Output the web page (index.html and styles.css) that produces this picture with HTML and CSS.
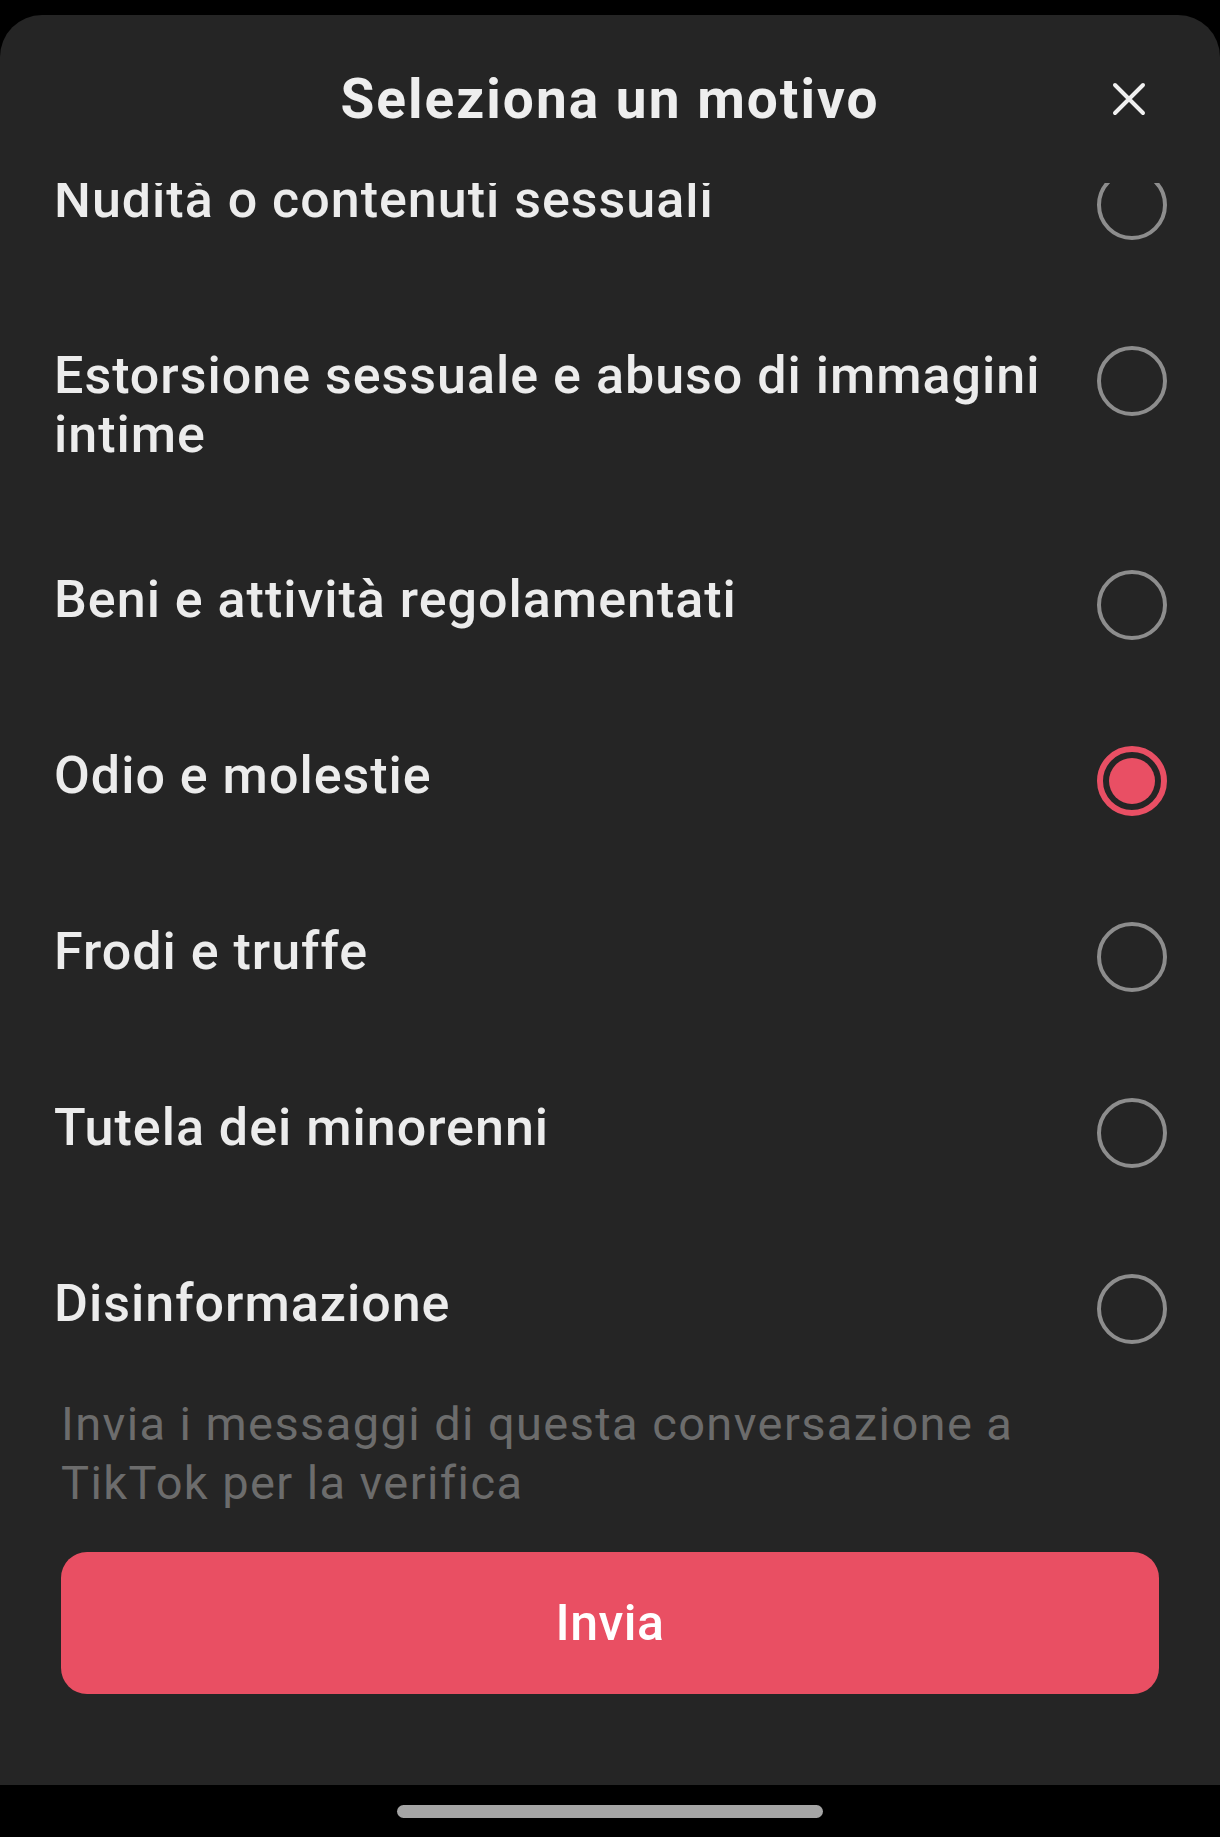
FILE: index.html
```html
<!DOCTYPE html>
<html lang="it">
<head>
    <meta charset="UTF-8">
    <meta name="viewport" content="width=device-width, initial-scale=1.0">
    <title>Seleziona un motivo</title>
    <link rel="stylesheet" href="styles.css">
</head>
<body>
    <div class="screen">
        <div class="sheet">
            <div class="sheet-header">
                <span></span>
                <h1>Seleziona un motivo</h1>
                <button class="close-btn" aria-label="Chiudi">
                    <svg width="34" height="34" viewBox="0 0 34 34">
                        <path d="M3 3 L31 31 M31 3 L3 31" stroke="#f0f0f0" stroke-width="4" stroke-linecap="round"/>
                    </svg>
                </button>
            </div>

            <!-- lista motivi (scrollata) -->
            <div class="reason-scroll">
                <ul class="reason-list">
                    <li class="reason"><span class="reason-label">Nudità o contenuti sessuali</span><span class="radio"></span></li>
                    <li class="reason"><span class="reason-label">Estorsione sessuale e abuso di immagini intime</span><span class="radio"></span></li>
                    <li class="reason"><span class="reason-label">Beni e attività regolamentati</span><span class="radio"></span></li>
                    <li class="reason"><span class="reason-label">Odio e molestie</span><span class="radio selected"></span></li>
                    <li class="reason"><span class="reason-label">Frodi e truffe</span><span class="radio"></span></li>
                    <li class="reason"><span class="reason-label">Tutela dei minorenni</span><span class="radio"></span></li>
                    <li class="reason"><span class="reason-label">Disinformazione</span><span class="radio"></span></li>
                </ul>
            </div>

            <div class="sheet-footer">
                <p class="note">Invia i messaggi di questa conversazione a TikTok per la verifica</p>
                <button class="submit-btn">Invia</button>
            </div>
        </div>
        <div class="home-area">
            <div class="home-indicator"></div>
        </div>
    </div>
</body>
</html>
```

FILE: styles.css
```css
body {
    margin: 0;
    padding: 0;
    background-color: #000;
    font-family: Roboto, "Noto Sans", Arial, sans-serif;
}

.screen {
    height: 1837px;
    display: flex;
    flex-direction: column;
    padding-top: 15px;
    box-sizing: border-box;
}

.sheet {
    height: 1770px;
    background-color: #252525;
    border-radius: 42px 42px 0 0;
    display: flex;
    flex-direction: column;
    overflow: hidden;
}

.sheet-header {
    height: 168px;
    flex-shrink: 0;
    display: grid;
    grid-template-columns: 1fr auto 1fr;
    align-items: center;
    padding: 0 74px;
    box-sizing: border-box;
}

.sheet-header h1 {
    margin: 0;
    font-size: 55px;
    font-weight: 700;
    letter-spacing: 2px;
    color: #eeeeee;
}

.close-btn {
    justify-self: end;
    background: none;
    border: none;
    padding: 0;
    width: 34px;
    height: 34px;
    display: flex;
}

.reason-scroll {
    height: 1211px;
    flex-shrink: 0;
    overflow: hidden;
}

.reason-list {
    list-style-type: none;
    margin: -66px 0 0;
    padding: 0;
}

.reason {
    display: flex;
    align-items: flex-start;
    gap: 40px;
    padding: 53px 53px 53px 54px;
}

.reason-label {
    flex: 1;
    font-size: 52px;
    font-weight: 500;
    letter-spacing: 1px;
    line-height: 59px;
    color: #ececec;
    min-height: 70px;
}

.radio {
    width: 70px;
    height: 70px;
    flex-shrink: 0;
    box-sizing: border-box;
    border: 4px solid #8d8d8d;
    border-radius: 50%;
}

.radio.selected {
    border: 6px solid #e94f64;
    padding: 6px;
    background-color: #e94f64;
    background-clip: content-box;
}

.sheet-footer {
    padding: 0 61px;
}

.note {
    margin: 0;
    font-size: 47px;
    letter-spacing: 1.4px;
    line-height: 59px;
    color: #6c6c6c;
}

.submit-btn {
    display: block;
    width: 100%;
    height: 142px;
    margin-top: 40px;
    border: none;
    border-radius: 26px;
    background-color: #e94f63;
    color: #fff;
    font-family: inherit;
    font-size: 50px;
    font-weight: 500;
    letter-spacing: 0.5px;
}

.home-area {
    flex: 1;
    display: flex;
    justify-content: center;
    padding-top: 20px;
}

.home-indicator {
    width: 426px;
    height: 13px;
    border-radius: 7px;
    background-color: #a5a5a5;
}
```
